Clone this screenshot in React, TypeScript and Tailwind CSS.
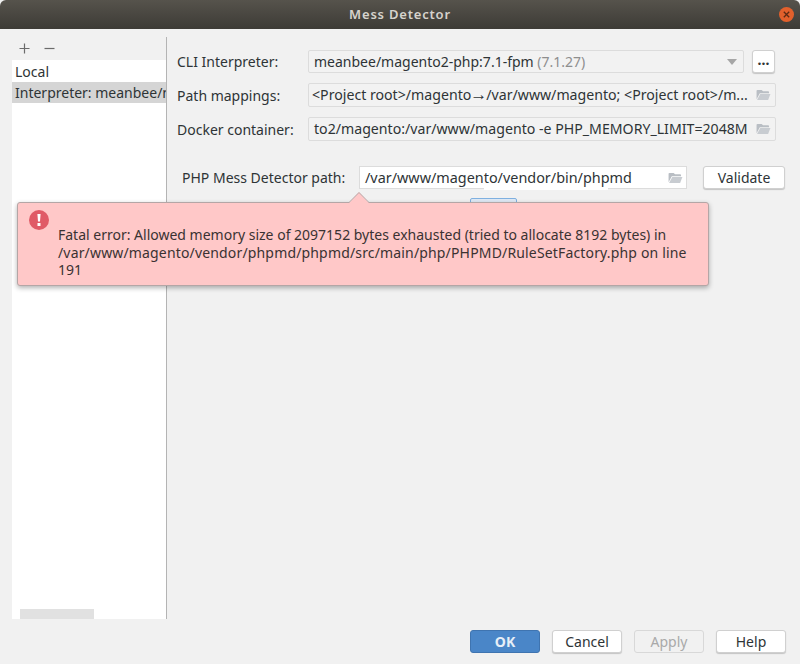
import React from 'react';

const FolderIcon = () => (
  <svg width="15" height="12" viewBox="0 0 16 13" className="shrink-0">
    <path d="M0.5 2 Q0.5 1 1.5 1 H6 L7.5 2.5 H13 Q14 2.5 14 3.5 V4.5 H4 L0.5 11 Z" fill="#b9bec4" />
    <path d="M4.5 5.5 H15.5 L13 12 H1 Z" fill="#c8ccd1" />
  </svg>
);

const PathField = ({ text, className }: { text: React.ReactNode; className?: string }) => (
  <div className="w-[468px] h-[24px] flex items-center justify-between pr-[4px] border border-[#dcdcdc] bg-[#f2f2f2] rounded-[2px]">
    <span className={`whitespace-nowrap text-[14.15px] ${className}`}>{text}</span>
    <FolderIcon />
  </div>
);

const DialogButton = ({ label, className }: { label: string; className: string }) => (
  <button className={`h-[23px] w-[70px] rounded-[3px] text-[14px] flex items-center justify-center ${className}`}>{label}</button>
);

export default function App() {
  return (
    <div className="relative w-[800px] h-[664px] flex flex-col bg-[#f1f1f1] text-[14px] text-[#2e3436] overflow-hidden font-['Noto_Sans','Open_Sans',sans-serif]">
      {/* title bar */}
      <div className="relative h-[29px] shrink-0 flex items-center justify-center rounded-t-[6px] bg-gradient-to-b from-[#56534c] to-[#3d3b36]">
        <span className="text-[13px] font-semibold tracking-[0.8px] text-[#d6d3cd]">Mess Detector</span>
        <div className="absolute right-[6px] top-[7px] w-[15px] h-[15px] rounded-full bg-[#e2602c] flex items-center justify-center">
          <svg width="7" height="7" viewBox="0 0 7 7">
            <path d="M0.8 0.8 L6.2 6.2 M6.2 0.8 L0.8 6.2" stroke="#5c2a14" strokeWidth="1.3" />
          </svg>
        </div>
      </div>

      <div className="flex-1 flex pl-[12px] pt-[8px] min-h-0">
        {/* sidebar */}
        <div className="w-[155px] shrink-0 flex flex-col border-r border-[#b4b4b4]">
          <div className="h-[23px] shrink-0 flex items-center gap-[14px] pl-[7px] pb-[1px]">
            <svg width="11" height="11" viewBox="0 0 11 11">
              <path d="M5.5 0.5 V10.5 M0.5 5.5 H10.5" stroke="#6b6b6b" strokeWidth="1.2" />
            </svg>
            <svg width="11" height="11" viewBox="0 0 11 11">
              <path d="M0.5 5.5 H10.5" stroke="#6b6b6b" strokeWidth="1.2" />
            </svg>
          </div>
          <div className="flex-1 bg-white flex flex-col overflow-hidden">
            <div className="h-[22px] shrink-0 flex items-center pl-[3px] whitespace-nowrap">Local</div>
            <div className="h-[21px] shrink-0 flex items-center pl-[3px] bg-[#d5d5d5] whitespace-nowrap overflow-hidden">Interpreter: meanbee/m</div>
            <div className="mt-auto ml-[8px] w-[74px] h-[10px] bg-[#e1e1e1]" />
          </div>
        </div>

        {/* settings */}
        <div className="flex-1 flex flex-col pl-[10px] pt-[13px]">
          <div className="flex items-center h-[23px]">
            <span className="w-[131px] shrink-0">CLI Interpreter:</span>
            <div className="w-[436px] h-[23px] flex items-center justify-between pl-[5px] pr-[6px] border border-[#dcdcdc] bg-[#f2f2f2] rounded-[2px]">
              <span className="whitespace-nowrap">meanbee/magento2-php:7.1-fpm <span className="text-[#8e8e8e]">(7.1.27)</span></span>
              <svg width="10" height="6" viewBox="0 0 10 6"><path d="M0 0 H10 L5 6 Z" fill="#a6a6a6" /></svg>
            </div>
            <button className="ml-[8px] w-[23px] h-[23px] bg-white border border-[#d0d0d0] rounded-[3px] shadow-[0_1px_1px_#c4c4c4] leading-none pb-[4px] font-bold text-[14px]">...</button>
          </div>
          <div className="flex items-center h-[24px] mt-[10px]">
            <span className="w-[131px] shrink-0">Path mappings:</span>
            <PathField className="pl-[3px]" text={<>&lt;Project root&gt;/magento<span className="text-[17px] leading-none -mx-[1px]">→</span>/var/www/magento; &lt;Project root&gt;/m...</>} />
          </div>
          <div className="flex items-center h-[24px] mt-[10px]">
            <span className="w-[131px] shrink-0">Docker container:</span>
            <PathField className="pl-[5px]" text="to2/magento:/var/www/magento -e PHP_MEMORY_LIMIT=2048M" />
          </div>
          <div className="flex items-center h-[23px] mt-[25px] pl-[5px]">
            <span className="w-[177px] shrink-0">PHP Mess Detector path:</span>
            <div className="w-[328px] h-[23px] flex items-center justify-between pl-[5px] pr-[3px] border border-[#dcdcdc] bg-white">
              <span className="whitespace-nowrap text-[14.4px]">/var/www/magento/vendor/bin/phpmd</span>
              <FolderIcon />
            </div>
            <button className="ml-[16px] w-[82px] h-[23px] bg-white border border-[#d0d0d0] rounded-[3px] shadow-[0_1px_1px_#c4c4c4]">Validate</button>
          </div>
        </div>
      </div>

      {/* footer */}
      <div className="h-[45px] shrink-0 flex items-start justify-end pt-[11px] pr-[14px] gap-[12px]">
        <DialogButton label="OK" className="bg-[#4a86c8] border border-[#3f74b0] text-[#e6eef7] font-bold" />
        <DialogButton label="Cancel" className="bg-white border border-[#d0d0d0] shadow-[0_1px_1px_#c4c4c4]" />
        <DialogButton label="Apply" className="bg-[#f1f1f1] border border-[#d8d8d8] text-[#a9a9a9]" />
        <DialogButton label="Help" className="bg-white border border-[#d0d0d0] shadow-[0_1px_1px_#c4c4c4]" />
      </div>

      {/* leftovers of a repaint under the popup */}
      <div className="absolute left-[484px] top-[188px] w-[124px] h-[2px] bg-white" />
      <div className="absolute left-[470px] top-[198px] w-[47px] h-[6px] bg-[#dfe9f5] border border-[#7fb0e0] rounded-t-[2px]" />

      {/* error balloon */}
      <div className="absolute left-[17px] top-[202px] w-[692px] h-[84px] bg-[#ffc8c8] border border-[#b4a6a6] rounded-[3px] shadow-[0_2px_5px_rgba(0,0,0,0.3)] pl-[40px] pt-[23px] leading-[17.5px] text-[#3a3232]">
        <svg className="absolute left-[331px] top-[-11px]" width="20" height="11" viewBox="0 0 20 11">
          <path d="M0 11 L10 0 L20 11 Z" fill="#ffc8c8" />
          <path d="M0 10.5 L10 0.5 L20 10.5" fill="none" stroke="#b4a6a6" strokeWidth="1" />
        </svg>
        <div className="absolute left-[11px] top-[7px] w-[20px] h-[20px] rounded-full bg-[#e05a66] flex items-center justify-center">
          <svg width="4" height="12" viewBox="0 0 4 12">
            <path d="M0.4 0 H3.6 L3 7.5 H1 Z M0.5 9 H3.5 V12 H0.5 Z" fill="#ffffff" />
          </svg>
        </div>
        <p>Fatal error: Allowed memory size of 2097152 bytes exhausted (tried to allocate 8192 bytes) in</p>
        <p className="tracking-[0.16px]">/var/www/magento/vendor/phpmd/phpmd/src/main/php/PHPMD/RuleSetFactory.php on line</p>
        <p>191</p>
      </div>
    </div>
  );
}
